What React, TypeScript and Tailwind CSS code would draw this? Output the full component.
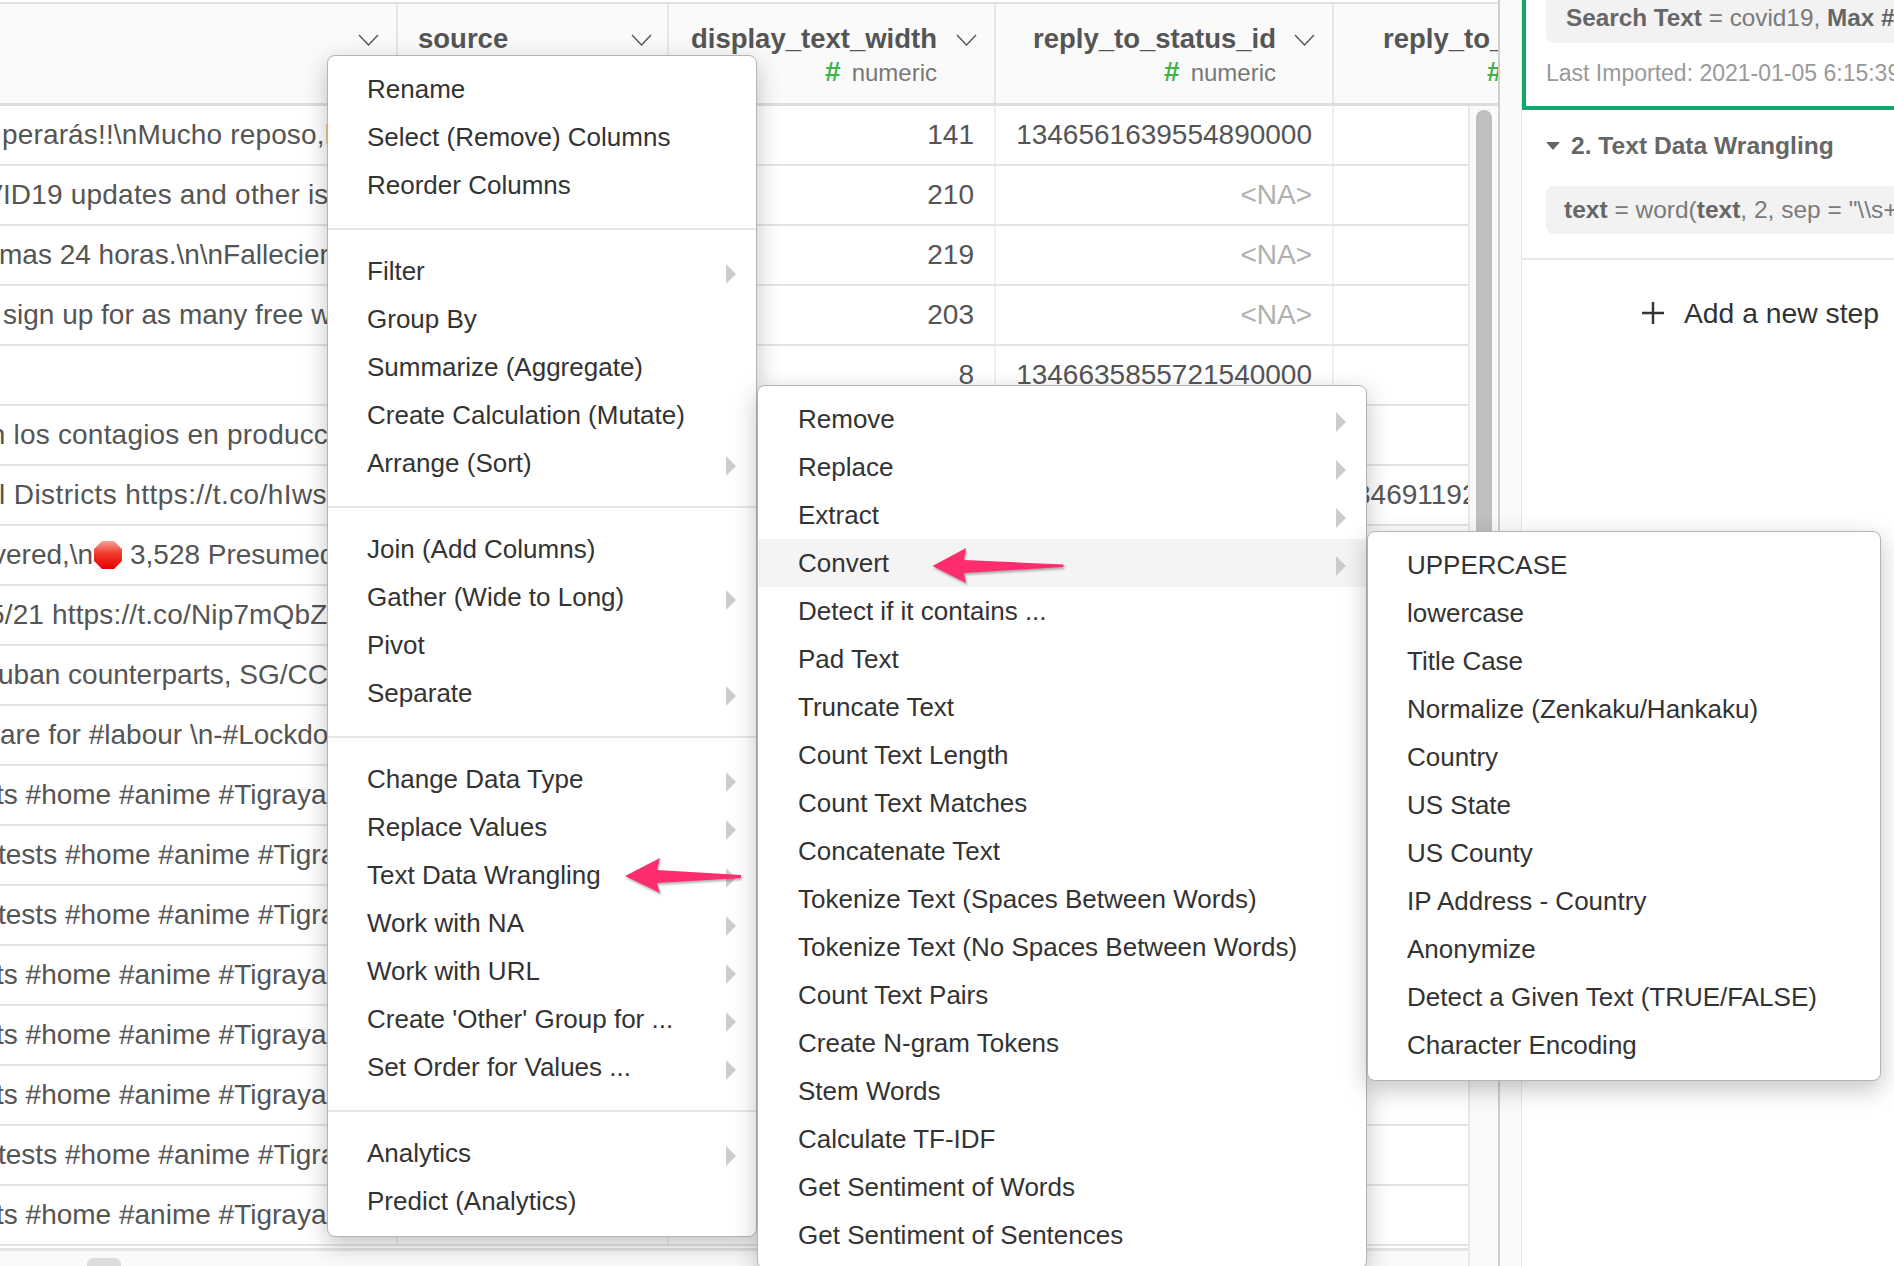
import React from 'react';

type MenuEntry = { label: string; sub?: boolean; active?: boolean } | null;

const mainMenu: MenuEntry[] = [
  { label: 'Rename' },
  { label: 'Select (Remove) Columns' },
  { label: 'Reorder Columns' },
  null,
  { label: 'Filter', sub: true },
  { label: 'Group By' },
  { label: 'Summarize (Aggregate)' },
  { label: 'Create Calculation (Mutate)' },
  { label: 'Arrange (Sort)', sub: true },
  null,
  { label: 'Join (Add Columns)' },
  { label: 'Gather (Wide to Long)', sub: true },
  { label: 'Pivot' },
  { label: 'Separate', sub: true },
  null,
  { label: 'Change Data Type', sub: true },
  { label: 'Replace Values', sub: true },
  { label: 'Text Data Wrangling', sub: true },
  { label: 'Work with NA', sub: true },
  { label: 'Work with URL', sub: true },
  { label: "Create 'Other' Group for ...", sub: true },
  { label: 'Set Order for Values ...', sub: true },
  null,
  { label: 'Analytics', sub: true },
  { label: 'Predict (Analytics)' },
];

const textMenu: MenuEntry[] = [
  { label: 'Remove', sub: true },
  { label: 'Replace', sub: true },
  { label: 'Extract', sub: true },
  { label: 'Convert', sub: true, active: true },
  { label: 'Detect if it contains ...' },
  { label: 'Pad Text' },
  { label: 'Truncate Text' },
  { label: 'Count Text Length' },
  { label: 'Count Text Matches' },
  { label: 'Concatenate Text' },
  { label: 'Tokenize Text (Spaces Between Words)' },
  { label: 'Tokenize Text (No Spaces Between Words)' },
  { label: 'Count Text Pairs' },
  { label: 'Create N-gram Tokens' },
  { label: 'Stem Words' },
  { label: 'Calculate TF-IDF' },
  { label: 'Get Sentiment of Words' },
  { label: 'Get Sentiment of Sentences' },
];

const convertMenu: MenuEntry[] = [
  { label: 'UPPERCASE' },
  { label: 'lowercase' },
  { label: 'Title Case' },
  { label: 'Normalize (Zenkaku/Hankaku)' },
  { label: 'Country' },
  { label: 'US State' },
  { label: 'US County' },
  { label: 'IP Address - Country' },
  { label: 'Anonymize' },
  { label: 'Detect a Given Text (TRUE/FALSE)' },
  { label: 'Character Encoding' },
];

const tsText = 'ts #home #anime #Tigrayan people';
const testsText = 'tests #home #anime #Tigrayan people';

const rows: { text: React.ReactNode; cls: string; width?: string; id?: string; na?: boolean; extra?: string }[] = [
  { text: 'perarás!!\\nMucho reposo,hidratación', cls: 'ml-[2px] tracking-[0.15px]', width: '141', id: '1346561639554890000' },
  { text: 'VID19 updates and other issues', cls: 'ml-[-16px] tracking-[0.2px]', width: '210', na: true },
  { text: 'mas 24 horas.\\n\\nFallecieron', cls: 'ml-[-1px]', width: '219', na: true },
  { text: 'sign up for as many free webinars', cls: 'ml-[3px]', width: '203', na: true },
  { text: '', cls: '', width: '8', id: '1346635855721540000' },
  { text: 'en los contagios en producción', cls: 'ml-[-26px] tracking-[0.2px]' },
  { text: 'l Districts https://t.co/hIwsK2', cls: 'ml-[-1px] tracking-[0.42px]', extra: '34691192' },
  {
    text: (
      <>
        {'vered,\\n'}
        <StopSign />
        {' 3,528 Presumed'}
      </>
    ),
    cls: 'ml-[-8px]',
  },
  { text: '5/21 https://t.co/Nip7mQbZ', cls: 'ml-[-11px] tracking-[0.15px]' },
  { text: 'uban counterparts, SG/CCS', cls: 'ml-[-2px]' },
  { text: 'are for #labour \\n-#Lockdown', cls: 'ml-[0px]' },
  { text: tsText, cls: 'ml-[-4px]' },
  { text: testsText, cls: 'ml-[-2px]' },
  { text: testsText, cls: 'ml-[-2px]' },
  { text: tsText, cls: 'ml-[-4px]' },
  { text: tsText, cls: 'ml-[-4px]' },
  { text: tsText, cls: 'ml-[-4px]' },
  { text: testsText, cls: 'ml-[-2px]' },
  { text: tsText, cls: 'ml-[-4px]' },
];

function StopSign() {
  return (
    <svg width="28" height="28" viewBox="0 0 28 28" className="inline-block align-[-5px] ml-[1px]">
      <defs>
        <linearGradient id="stop-fill" x1="0" y1="0" x2="0" y2="1">
          <stop offset="0" stopColor="#f9a39a" />
          <stop offset="0.45" stopColor="#f0392b" />
          <stop offset="1" stopColor="#e60000" />
        </linearGradient>
      </defs>
      <polygon points="8,0 20,0 28,8 28,20 20,28 8,28 0,20 0,8" fill="url(#stop-fill)" />
    </svg>
  );
}

function Chevron() {
  return (
    <svg width="21" height="12" viewBox="0 0 21 12" className="shrink-0 mt-[12px]">
      <polyline points="1,1 10.5,11 20,1" fill="none" stroke="#555" strokeWidth="1.4" />
    </svg>
  );
}

function Menu({ items, className }: { items: MenuEntry[]; className: string }) {
  return (
    <div className={`absolute z-10 bg-white border border-[#b4b4b4] rounded-lg shadow-[0_8px_24px_rgba(0,0,0,0.24)] ${className}`}>
      {items.map((item, i) =>
        item === null ? (
          <div key={i} className="h-[2px] mt-[19px] mb-[17px] bg-[#e6e6e6]" />
        ) : (
          <div
            key={i}
            className={`h-[48px] flex items-center justify-between pl-[var(--pl)] pr-[20px] ${item.active ? 'bg-[#f4f4f4]' : ''}`}
          >
            <span className="whitespace-nowrap">{item.label}</span>
            {item.sub && <span className="mt-[6px] w-0 h-0 border-y-[10px] border-y-transparent border-l-[10px] border-l-[#cccccc]" />}
          </div>
        ),
      )}
    </div>
  );
}

function PinkArrow({ className, points, width }: { className: string; points: string; width: number }) {
  return (
    <svg
      width={width}
      height="48"
      className={`absolute z-20 drop-shadow-[1px_2px_1px_rgba(0,0,0,0.3)] ${className}`}
    >
      <polygon points={points} fill="#fe2e6e" />
    </svg>
  );
}

function HeaderCell({ name, className }: { name: string; className: string }) {
  return (
    <div className={`flex justify-end pr-[17px] pt-[18px] border-r-2 border-[#e6e6e6] ${className}`}>
      <div className="text-right">
        <div className="text-[27.5px] font-bold leading-[34px] text-[#555]">{name}</div>
        <div className="text-[24px] leading-[32px] text-[#777]">
          <span className="text-[#3cb44a] font-bold text-[28px] mr-[11px]">#</span>numeric
        </div>
      </div>
      <Chevron />
    </div>
  );
}

export default function App() {
  return (
    <div className="relative w-[1894px] h-[1266px] overflow-hidden flex bg-white text-[#333] font-['Liberation_Sans',Arial,sans-serif]">
      {/* data grid */}
      <div className="w-[1500px] shrink-0 border-r-2 border-[#cfcfcf] flex flex-col pt-[2px]">
        <div className="h-[104px] shrink-0 flex bg-[#fafafa] border-t-2 border-b-[3px] border-t-[#e0e0e0] border-b-[#dddddd]">
          <div className="w-[398px] flex justify-end pr-[17px] pt-[18px] border-r-2 border-[#e6e6e6]">
            <Chevron />
          </div>
          <div className="w-[271px] flex justify-between pl-[20px] pr-[15px] pt-[18px] border-r-2 border-[#e6e6e6]">
            <div className="text-[27.5px] font-bold leading-[34px] text-[#555]">source</div>
            <Chevron />
          </div>
          <HeaderCell name="display_text_width" className="w-[327px] gap-[19px]" />
          <HeaderCell name="reply_to_status_id" className="w-[338px] gap-[18px]" />
          <div className="flex-1 overflow-hidden whitespace-nowrap pt-[18px]">
            <div className="text-[27.5px] font-bold leading-[34px] text-[#555] pl-[49px]">reply_to_status_id</div>
            <div className="text-[28px] leading-[32px] font-bold text-[#3cb44a] pl-[153px]">#</div>
          </div>
        </div>

        <div className="flex-1 flex min-h-0">
          <div className="w-[1468px] shrink-0 flex flex-col">
            {rows.map((r, i) => (
              <div key={i} className="h-[60px] shrink-0 flex border-b-2 border-[#e4e4e4] text-[28px] leading-[58px] text-[#555]">
                <div className="w-[398px] shrink-0 overflow-hidden whitespace-nowrap border-r-2 border-[#f0f0f0]">
                  <div className={r.cls}>{r.text}</div>
                </div>
                <div className="w-[271px] shrink-0 border-r-2 border-[#f0f0f0]" />
                <div className="w-[327px] shrink-0 text-right pr-[20px] border-r-2 border-[#f0f0f0]">{r.width}</div>
                <div className={`w-[338px] shrink-0 text-right pr-[20px] border-r-2 border-[#f0f0f0] ${r.na ? 'text-[#b0b0b0]' : ''}`}>
                  {r.na ? '<NA>' : r.id}
                </div>
                <div className="flex-1 overflow-hidden whitespace-nowrap pl-[21px]">{r.extra}</div>
              </div>
            ))}
            <div className="h-[3px] mt-[2px] shrink-0 bg-[#e6e6e6]" />
            <div className="flex-1 bg-[#fafafa] overflow-hidden">
              <div className="ml-[87px] mt-[7px] w-[34px] h-[14px] rounded-md bg-[#dcdcdc]" />
            </div>
          </div>
          <div className="flex-1 bg-[#fafafa] border-l-2 border-[#e8e8e8] pl-[6px] pt-[4px]">
            <div className="w-[16px] h-[700px] rounded-full bg-[#bfbfbf]" />
          </div>
        </div>
      </div>

      <div className="w-[21px] shrink-0 bg-[#fafafa]" />

      {/* steps panel */}
      <div className="flex-1 min-w-0 overflow-hidden border-l border-[#e8e8e8] whitespace-nowrap">
        <div className="h-[110px] border-l-4 border-b-4 border-[#0fa96b]">
          <div className="ml-[20px] h-[43px] rounded-bl-lg bg-[#f2f2f2] pl-[20px] text-[24.3px] leading-[36px] text-[#7a7a7a] overflow-hidden">
            <b className="text-[#666]">Search Text</b> = covid19, <b className="text-[#666]">Max #</b> of Tweets = 10000
          </div>
          <div className="ml-[20px] mt-[18px] text-[23px] leading-[24px] text-[#999]">Last Imported: 2021-01-05 6:15:39 AM</div>
        </div>
        <div className="pt-[21px] pl-[24px] flex items-center h-[51px]">
          <span className="w-0 h-0 border-x-[7px] border-x-transparent border-t-[8px] border-t-[#666] mr-[11px]" />
          <span className="text-[24.6px] leading-[30px] font-bold text-[#666]">2. Text Data Wrangling</span>
        </div>
        <div className="ml-[24px] mt-[25px] h-[48px] rounded-l-lg bg-[#f2f2f2] pl-[18px] text-[24.5px] leading-[48px] text-[#7a7a7a] overflow-hidden">
          <b className="text-[#666]">text</b> = word(<b className="text-[#666]">text</b>, 2, sep = {'"\\\\s+")'}
        </div>
        <div className="mt-[24px] h-[2px] bg-[#e8e8e8]" />
        <div className="mt-[33px] pl-[120px] flex items-center gap-[20px] text-[28.3px] leading-[40px] text-[#333]">
          <svg width="22" height="22" viewBox="0 0 22 22" className="shrink-0">
            <path d="M11 0v22M0 11h22" stroke="#333" strokeWidth="2.4" />
          </svg>
          <span>Add a new step</span>
        </div>
      </div>

      {/* context menus */}
      <Menu items={mainMenu} className="left-[327px] top-[55px] w-[430px] pt-[9px] pb-[11px] text-[26px] [--pl:39px]" />
      <Menu items={textMenu} className="left-[757px] top-[385px] w-[610px] pt-[9px] pb-[9px] text-[26px] [--pl:40px]" />
      <Menu items={convertMenu} className="left-[1367px] top-[531px] w-[514px] pt-[9px] pb-[11px] text-[26px] [--pl:39px]" />

      <PinkArrow className="left-[620px] top-[852px]" width={125} points="5,24 40,6 37,18 121,23 121,26 37,31 40,41" />
      <PinkArrow className="left-[928px] top-[542px]" width={140} points="4.5,24 38,6 36,18 135.5,22.5 135.5,25 36,31 38,41" />
    </div>
  );
}
